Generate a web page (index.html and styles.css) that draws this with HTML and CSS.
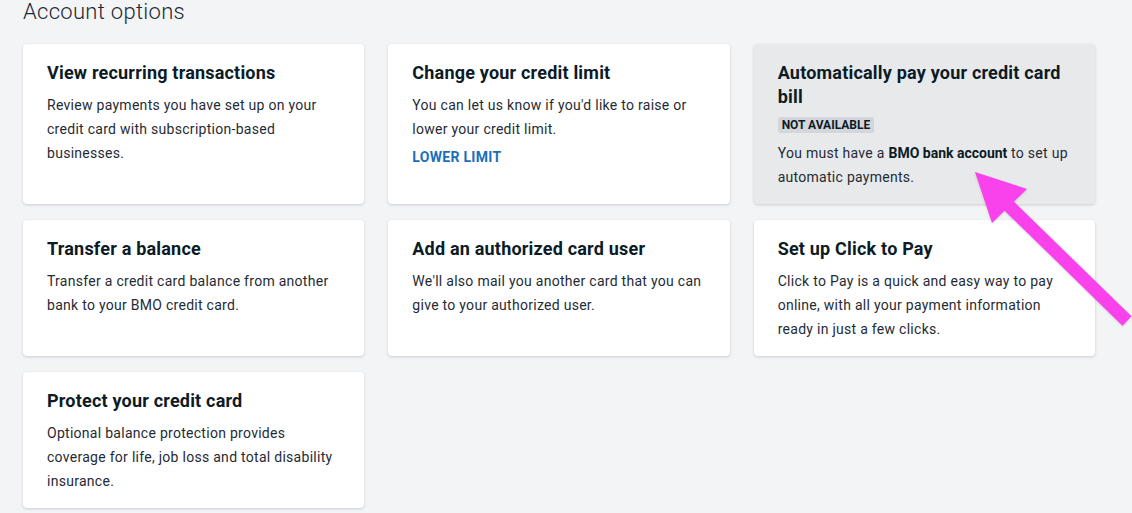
FILE: index.html
```html
<!DOCTYPE html>
<html lang="en">
<head>
<meta charset="utf-8">
<title>Account options</title>
<link rel="stylesheet" href="styles.css">
</head>
<body>
<main class="page">
  <h2 class="page-title">Account options</h2>
  <div class="grid">
    <section class="card">
      <h3 class="card-title">View recurring transactions</h3>
      <p class="card-text">Review payments you have set up on your credit card with subscription-based businesses.</p>
    </section>
    <section class="card">
      <h3 class="card-title">Change your credit limit</h3>
      <p class="card-text">You can let us know if you'd like to raise or lower your credit limit.</p>
      <a class="card-link" href="#">LOWER LIMIT</a>
    </section>
    <section class="card card-disabled">
      <h3 class="card-title">Automatically pay your credit card bill</h3>
      <span class="badge">NOT AVAILABLE</span>
      <p class="card-text">You must have a <strong>BMO bank account</strong> to set up automatic payments.</p>
    </section>
    <section class="card">
      <h3 class="card-title">Transfer a balance</h3>
      <p class="card-text">Transfer a credit card balance from another bank to your BMO credit card.</p>
    </section>
    <section class="card">
      <h3 class="card-title">Add an authorized card user</h3>
      <p class="card-text">We'll also mail you another card that you can give to your authorized user.</p>
    </section>
    <section class="card">
      <h3 class="card-title">Set up Click to Pay</h3>
      <p class="card-text">Click to Pay is a quick and easy way to pay online, with all your payment information ready in just a few clicks.</p>
    </section>
    <section class="card">
      <h3 class="card-title">Protect your credit card</h3>
      <p class="card-text">Optional balance protection provides coverage for life, job loss and total disability insurance.</p>
    </section>
  </div>
  <svg class="annotation" width="1132" height="513" viewBox="0 0 1132 513" aria-hidden="true">
    <line x1="1004" y1="201" x2="1127" y2="321" stroke="#f942ec" stroke-width="13" stroke-linecap="butt"/>
    <polygon points="975,172 1027,189 992,223" fill="#f942ec"/>
  </svg>
</main>
</body>
</html>
```
FILE: styles.css
```css
html, body {
  margin: 0;
  padding: 0;
  background: #f3f4f6;
}
body {
  font-family: Roboto, "Liberation Sans", Arial, sans-serif;
  color: #1e2a33;
  width: 1132px;
  height: 513px;
  overflow: hidden;
}
.page {
  position: relative;
  padding: 0 0 0 23px;
}
.page-title {
  margin: 0 0 20px;
  font-size: 22px;
  line-height: 24px;
  font-weight: 300;
  letter-spacing: 0.3px;
  color: #1c2833;
}
.grid {
  width: 1072px;
  display: grid;
  grid-template-columns: repeat(3, 1fr);
  column-gap: 24px;
  row-gap: 16px;
}
.card {
  background: #ffffff;
  border-radius: 4px;
  box-shadow: 0 1px 3px rgba(20, 30, 40, 0.18);
  padding: 17px 24px 15px;
  display: flex;
  flex-direction: column;
  align-items: flex-start;
}
.card-disabled {
  background: #e8e9eb;
}
.card-title {
  margin: 0 0 8px;
  font-size: 18px;
  line-height: 24px;
  font-weight: 700;
  letter-spacing: 0.2px;
  color: #0c1b26;
}
.card-text {
  margin: 0;
  font-size: 14px;
  line-height: 24px;
  letter-spacing: 0.28px;
  color: #1f2b35;
}
.card-text strong {
  font-weight: 700;
  letter-spacing: 0;
  color: #0c1b26;
}
.card-link {
  margin-top: 4px;
  font-size: 14px;
  line-height: 24px;
  font-weight: 700;
  letter-spacing: 0.3px;
  color: #1a6fb8;
  text-decoration: none;
}
.badge {
  display: inline-block;
  margin: 0 0 8px;
  padding: 0 4px;
  height: 16px;
  line-height: 16px;
  font-size: 12px;
  font-weight: 700;
  color: #0c1b26;
  background: #d3d7dc;
  border-radius: 2px;
}
.annotation {
  position: absolute;
  left: 0;
  top: 0;
  pointer-events: none;
  filter: drop-shadow(0 1px 1px rgba(0, 0, 0, 0.15));
}
```
